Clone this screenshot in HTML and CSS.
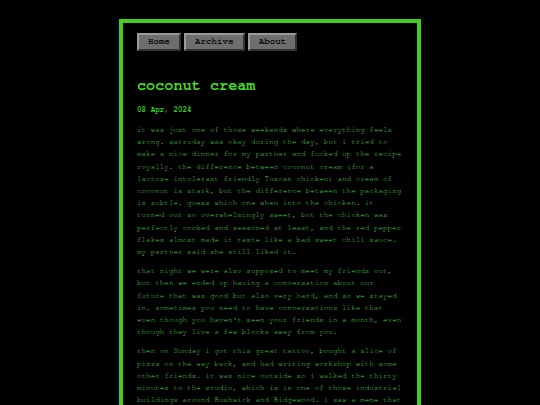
FILE: index.html
```html
<!DOCTYPE html>
<html>
<head>
<meta charset="utf-8">
<title>coconut cream</title>
<link rel="stylesheet" href="styles.css">
</head>
<body>
<div class="page">
  <nav class="nav">
    <a class="btn" href="#">Home</a>
    <a class="btn" href="#">Archive</a>
    <a class="btn" href="#">About</a>
  </nav>
  <h1 class="title">coconut cream</h1>
  <div class="date">08 Apr, 2024</div>
  <p>it was just one of those weekends where everything feels wrong. satruday was okay during the day, but i tried to make a nice dinner for my partner and fucked up the recipe royally. the difference between coconut cream (for a lactose intolerant friendly Tuscan chicken) and cream of coconut is stark, but the difference between the packaging is subtle. guess which one when into the chicken. it turned out so overwhelmingly sweet, but the chicken was perfectly cooked and seasoned at least, and the red pepper flakes almost made it taste like a bad sweet chili sauce. my partner said she still liked it.</p>
  <p>that night we were also supposed to meet my friends out, but then we ended up having a conversation about our future that was good but also very hard, and so we stayed in. sometimes you need to have conversations like that even though you haven't seen your friends in a month, even though they live a few blocks away from you.</p>
  <p>then on Sunday i got this great tattoo, bought a slice of pizza on the way back, and had writing workshop with some other friends. it was nice outside so i walked the thirty minutes to the studio, which is in one of those industrial buildings around Bushwick and Ridgewood. i saw a meme that said something about how the weekend is never long enough and i felt that.</p>
</div>
</body>
</html>
```

FILE: styles.css
```css
html, body {
  background: #000;
}
body {
  margin: 0;
  padding: 19px 0 0;
  font-family: "Nimbus Mono PS", "Nimbus Mono L", "FreeMono", "Courier 10 Pitch", "Liberation Mono", "Courier New", monospace;
}
.page {
  width: 266px;
  margin: 0 auto;
  padding: 10px 14px 20px;
  border: 4px solid #44cc22;
  background: #000;
}
.nav {
  display: flex;
  gap: 3px;
}
.btn {
  display: block;
  font-size: 9.2px;
  font-weight: bold;
  line-height: 12px;
  color: #111;
  text-decoration: none;
  background: #6e6e6e;
  padding: 1px 9px;
  border: 2px solid;
  border-color: #9a9a9a #333 #333 #9a9a9a;
}
.title {
  margin: 26px 0 0;
  font-size: 15.2px;
  line-height: 18px;
  font-weight: bold;
  color: #44dd22;
}
.date {
  margin-top: 9px;
  font-size: 7.6px;
  line-height: 12px;
  font-weight: bold;
  color: #33cc22;
}
p {
  margin: 8px 0 0;
  font-size: 7.6px;
  line-height: 12.2px;
  color: #4ccc4c;
}
p + p {
  margin-top: 7px;
}
```
